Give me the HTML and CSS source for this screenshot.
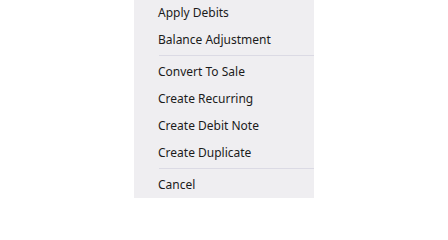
FILE: index.html
```html
<!DOCTYPE html>
<html>
<head>
<meta charset="utf-8">
<link rel="stylesheet" href="styles.css">
</head>
<body>
<div class="menu">
  <div class="item">Apply Debits</div>
  <div class="item">Balance Adjustment</div>
  <div class="sep"></div>
  <div class="item">Convert To Sale</div>
  <div class="item">Create Recurring</div>
  <div class="item">Create Debit Note</div>
  <div class="item">Create Duplicate</div>
  <div class="sep"></div>
  <div class="item">Cancel</div>
</div>
</body>
</html>
```
FILE: styles.css
```css
html, body {
  margin: 0;
  padding: 0;
  background: #ffffff;
}
.menu {
  margin-left: 134px;
  margin-top: -1px;
  width: 180px;
  background: #efeef1;
  box-shadow: 0 1px 0 #9c9c9c, 0 2px 1px -1px rgba(0, 0, 0, 0.25);
  font-family: "Noto Sans", "Open Sans", sans-serif;
  font-size: 12px;
  color: #1b1b1b;
}
.item {
  height: 27px;
  line-height: 27px;
  padding-left: 24px;
  white-space: nowrap;
}
.sep {
  height: 1px;
  margin: 2px 0 2px 25px;
  background: #dbdae4;
}
```
